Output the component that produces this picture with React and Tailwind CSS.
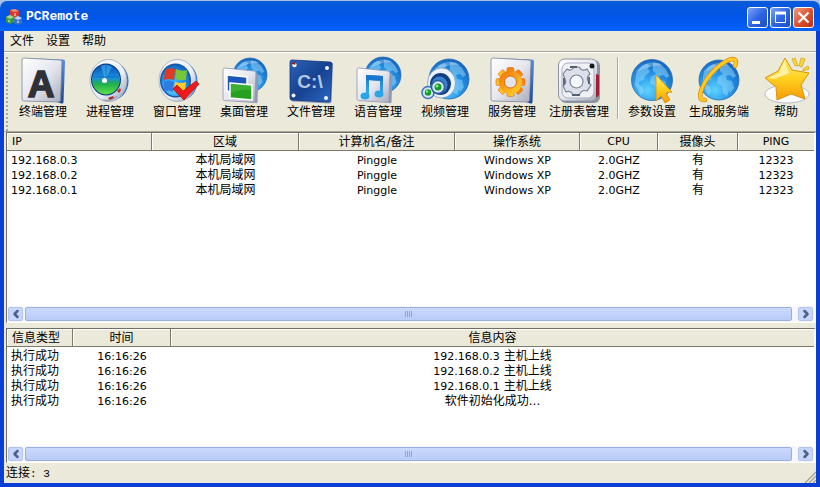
import { ChevronLeft, ChevronRight } from "lucide-react";

const hosts = [
  { ip: "192.168.0.3", area: "本机局域网", name: "Pinggle", os: "Windows XP", cpu: "2.0GHZ", camera: "有", ping: "12323" },
  { ip: "192.168.0.2", area: "本机局域网", name: "Pinggle", os: "Windows XP", cpu: "2.0GHZ", camera: "有", ping: "12323" },
  { ip: "192.168.0.1", area: "本机局域网", name: "Pinggle", os: "Windows XP", cpu: "2.0GHZ", camera: "有", ping: "12323" },
];

const logs = [
  { type: "执行成功", time: "16:16:26", ip: "192.168.0.3", text: "主机上线" },
  { type: "执行成功", time: "16:16:26", ip: "192.168.0.2", text: "主机上线" },
  { type: "执行成功", time: "16:16:26", ip: "192.168.0.1", text: "主机上线" },
  { type: "执行成功", time: "16:16:26", ip: "", text: "软件初始化成功..." },
];

// Gradients shared by all toolbar icons
function IconDefs() {
  return (
    <svg width="0" height="0" className="absolute" aria-hidden="true">
      <defs>
        <linearGradient id="plate" x1="0" y1="0" x2="1" y2="1">
          <stop offset="0" stopColor="#ffffff" />
          <stop offset="0.5" stopColor="#e6e7ef" />
          <stop offset="1" stopColor="#a9acba" />
        </linearGradient>
        <linearGradient id="edge" x1="0" y1="0" x2="0" y2="1">
          <stop offset="0" stopColor="#5b8fdc" />
          <stop offset="1" stopColor="#1c4796" />
        </linearGradient>
        <radialGradient id="globe" cx="0.4" cy="0.75" r="0.8">
          <stop offset="0" stopColor="#5fd2ff" />
          <stop offset="0.5" stopColor="#2596e8" />
          <stop offset="1" stopColor="#1560b8" />
        </radialGradient>
        <linearGradient id="ring" x1="0" y1="0" x2="1" y2="1">
          <stop offset="0" stopColor="#ffffff" />
          <stop offset="0.6" stopColor="#e9edf5" />
          <stop offset="1" stopColor="#8e9ab4" />
        </linearGradient>
        <linearGradient id="radar" x1="0" y1="0" x2="0" y2="1">
          <stop offset="0" stopColor="#0a4fb4" />
          <stop offset="0.45" stopColor="#1a8fe0" />
          <stop offset="0.65" stopColor="#1fb04a" />
          <stop offset="1" stopColor="#5fe04c" />
        </linearGradient>
        <linearGradient id="gold" x1="0" y1="0" x2="0" y2="1">
          <stop offset="0" stopColor="#fff27a" />
          <stop offset="0.5" stopColor="#ffcf1f" />
          <stop offset="1" stopColor="#f59a08" />
        </linearGradient>
        <linearGradient id="orange" gradientUnits="userSpaceOnUse" x1="-12" y1="-12" x2="12" y2="12">
          <stop offset="0" stopColor="#f06a10" />
          <stop offset="1" stopColor="#ffdc28" />
        </linearGradient>
        <linearGradient id="note" x1="0" y1="0" x2="0" y2="1">
          <stop offset="0" stopColor="#1a76cf" />
          <stop offset="1" stopColor="#35b5f2" />
        </linearGradient>
        <linearGradient id="drive" x1="0" y1="0" x2="1" y2="1">
          <stop offset="0" stopColor="#2c62b8" />
          <stop offset="0.5" stopColor="#174291" />
          <stop offset="1" stopColor="#2a69c4" />
        </linearGradient>
      </defs>
    </svg>
  );
}

function Icon({ children }) {
  return (
    <svg width="48" height="48" viewBox="0 0 48 48" className="block overflow-visible" aria-hidden="true">
      {children}
    </svg>
  );
}

function Globe({ cx, cy, r }) {
  return (
    <g transform={`translate(${cx} ${cy}) scale(${r / 20})`}>
      <circle r="20" fill="url(#globe)" stroke="#2a6db0" strokeWidth="0.8" />
      <path
        d="M-15 -9l5-5 5-2 3 2-2 3 2 3-5 4-1 4-4 1-1 3 4 3 1 5-3 3-3-6-3-4zM1-17l6 1 6 5 4 7-3 2-3-3-4 1 1 4 5 1 1 5-4 5-2 5-4-3-1-7-5-3 1-6 5-3-3-3zM10 8l4-3 1 3-4 5z"
        fill="#a5e2ff"
        opacity="0.45"
      />
      <path d="M-14-8a17 17 0 0 1 25-6c-8-1-18 2-25 6z" fill="#fff" opacity="0.25" />
    </g>
  );
}

function Plate() {
  return (
    <>
      <path d="M5 1l39 1.500q2 0 2 2L44.500 45q0 2-2 1.500L38 45 42 4z" fill="url(#edge)" />
      <path d="M5 1l36 2q2 0 2 2l-1.500 38q0 2-2 2L5 44q-2 0-2-2V3q0-2 2-2z" fill="url(#plate)" stroke="#7a849c" strokeWidth="0.8" />
    </>
  );
}

function Card() {
  return (
    <>
      <path d="M35 15l2.500 1.500q1 .5 1 1.500l-1 27q0 1.500-2 1L32 45z" fill="#8f99b5" />
      <path d="M4.500 11L34 14q2 .3 2 2l-1 27.500q0 2-2 2L4.500 43.500q-1.500 0-1.500-2V12.500Q3 11 4.500 11z" fill="url(#plate)" stroke="#8b96b4" strokeWidth="0.8" />
    </>
  );
}

const TerminalIcon = () => (
  <Icon>
    <Plate />
    <text x="22" y="40" textAnchor="middle" fontSize="37" fontWeight="bold" fill="#2f3136" stroke="#2f3136" strokeWidth="1.500" fontFamily="Liberation Sans, sans-serif">
      A
    </text>
  </Icon>
);

const ProcessIcon = () => (
  <Icon>
    <ellipse cx="26" cy="24" rx="16.500" ry="19" fill="#1c6cc4" />
    <ellipse cx="22.500" cy="23.500" rx="18.500" ry="21" fill="url(#ring)" stroke="#98a6bf" strokeWidth="0.8" />
    <ellipse cx="20" cy="22.500" rx="15" ry="16" fill="#0a3a7c" />
    <ellipse cx="20" cy="22.500" rx="14" ry="15" fill="url(#radar)" />
    <path d="M19 23L15 9q6-3 11 1z" fill="#4fc3ff" opacity="0.5" />
    <path d="M7 20h26M20 8v14" stroke="#06336b" strokeWidth="0.6" opacity="0.5" fill="none" />
    <circle cx="18.500" cy="23.500" r="2.500" fill="#fff" />
    <path d="M22 41l5-2 1 2-4 2z" fill="#b3271e" />
    <path d="M31 34l3-3 1 2-2 3z" fill="#c62c22" />
    <path d="M17 43q8 2 14-4" stroke="#8b94a6" strokeWidth="1" fill="none" />
  </Icon>
);

const WindowIcon = () => (
  <Icon>
    <ellipse cx="28" cy="24" rx="16.500" ry="19" fill="#2a7acb" />
    <ellipse cx="24.500" cy="23.500" rx="18.500" ry="21" fill="url(#ring)" stroke="#98a6bf" strokeWidth="0.8" />
    <ellipse cx="22.500" cy="23.500" rx="15.500" ry="17" fill="#1658a8" />
    <ellipse cx="22.500" cy="23.500" rx="14" ry="15.500" fill="url(#globe)" />
    <path d="M12 13q5-3 10-1l-1 11q-5-2-10 0z" fill="#e03a24" />
    <path d="M23 12q6 3 11 1l-1 10q-5 1-11-1z" fill="#76c63a" />
    <path d="M11 25q5-3 10 0l-1 10q-5-3-9 0z" fill="#2f7de4" />
    <path d="M22 25q6 2 11 0l-1 10q-5 2-11-1z" fill="#fcca2b" />
    <path d="M20 32l4-4 6 6L43 24l3 3-15 16z" fill="#ec1c1c" stroke="#b30d0d" strokeWidth="0.7" />
  </Icon>
);

const DesktopIcon = () => (
  <Icon>
    <Globe cx={30} cy={18} r={17} />
    <Card />
    <path d="M7 18l20 2v16L7 34z" fill="#1e57bb" stroke="#fff" strokeWidth="1.500" />
    <path d="M10 26l22 2v15l-22-2z" fill="#26a01f" stroke="#fff" strokeWidth="1.500" />
    <path d="M11 27l20 2v4q-10-1-20 3z" fill="#6fd05c" opacity="0.3" />
  </Icon>
);

const FileIcon = () => (
  <Icon>
    <path d="M43 5l3 1.500L44.500 45l-2 1.500L5 44.500 3 42z" fill="#8d99b8" />
    <path d="M5 3l38 2q2 0 2 2l-1.500 36q0 2-2 2L5 43q-2 0-2-2V5q0-2 2-2z" fill="url(#drive)" stroke="#12387c" strokeWidth="0.8" />
    <circle cx="7.500" cy="8" r="2.200" fill="#fff" />
    <path d="M4 6l5-1-1 3z" fill="#8f1620" />
    <circle cx="40" cy="11" r="2" fill="#eef4ff" />
    <circle cx="6.500" cy="38.500" r="2" fill="#eef4ff" />
    <circle cx="39" cy="41" r="2" fill="#eef4ff" />
    <text x="23" y="31" textAnchor="middle" fontSize="19" fontWeight="bold" fill="#b4c8e6" fontFamily="Liberation Sans, sans-serif">
      C:\
    </text>
  </Icon>
);

const AudioIcon = () => (
  <Icon>
    <Globe cx={29} cy={18} r={18} />
    <Card />
    <path d="M12 18l17 1v5l-14-1v17h-3zM26 21h3v16h-3z" fill="url(#note)" />
    <path d="M12 18l17 1v5l-17-1z" fill="#1a76cf" />
    <ellipse cx="11" cy="39" rx="4.500" ry="3.500" fill="#2ba5ea" />
    <ellipse cx="25" cy="37" rx="4.500" ry="3.500" fill="#2ba5ea" />
  </Icon>
);

const VideoIcon = () => (
  <Icon>
    <Globe cx={28} cy={22} r={20} />
    <ellipse cx="20.500" cy="26" rx="14" ry="15" fill="#eef3fa" stroke="#7f9cc0" strokeWidth="0.8" />
    <ellipse cx="19.500" cy="27" rx="10.500" ry="11" fill="#123f80" />
    <ellipse cx="18.500" cy="28" rx="8" ry="8.500" fill="#3b7fd0" />
    <circle cx="7" cy="35.500" r="6" fill="#d6e6f8" stroke="#3a73b8" strokeWidth="1.500" />
    <circle cx="17" cy="30" r="6.500" fill="#d6e6f8" stroke="#285f9f" strokeWidth="1.500" />
    <circle cx="17" cy="30" r="3.500" fill="#1a9a2c" />
    <circle cx="7" cy="35.500" r="3.200" fill="#1a9a2c" />
    <circle cx="16" cy="29" r="1.500" fill="#7df06e" />
    <circle cx="6" cy="34.500" r="1.300" fill="#7df06e" />
  </Icon>
);

const ServiceIcon = () => (
  <Icon>
    <Plate />
    <g transform="translate(22.500 25)">
      {[0, 45, 90, 135].map((a) => (
        <rect key={a} x="-3.500" y="-14.500" width="7" height="29" rx="1.500" fill="url(#orange)" stroke="#e0680c" strokeWidth="0.6" transform={`rotate(${a})`} />
      ))}
      <circle r="11.500" fill="url(#orange)" />
      <circle r="6" fill="#e4e5ec" stroke="#e0680c" strokeWidth="1" />
    </g>
  </Icon>
);

const RegistryIcon = () => (
  <Icon>
    <rect x="5" y="3" width="40" height="43" rx="6" fill="#8c93a5" />
    <rect x="3.500" y="2" width="39" height="42" rx="6" fill="url(#plate)" stroke="#8b91a2" strokeWidth="1" />
    <rect x="7" y="6" width="32" height="35" rx="6" fill="#eff1f6" stroke="#a9afbf" strokeWidth="1" />
    <path
      d="M12 12q4 3 7-2h5q3 5 8 2l3 5q-4 3-2 7 1 3 3 4l-4 6q-5-2-8 4h-6q-2-5-7-3l-3-6q4-3 2-7-1-3-2-5z"
      fill="#dde0ea"
      stroke="#7a8294"
      strokeWidth="1.200"
    />
    <circle cx="21.500" cy="24.500" r="6.500" fill="#f7f8fb" stroke="#7c8497" strokeWidth="1.200" />
    <path d="M9 21v7M34 20v7M15 10h7M17 38h8" stroke="#52606f" strokeWidth="1.800" />
    <circle cx="37" cy="9" r="2.500" fill="#15171d" />
    <path d="M41 17l3 1v20l-3 3z" fill="#9c1f33" />
  </Icon>
);

const SettingsIcon = () => (
  <Icon>
    <Globe cx={24} cy={23} r={20.5} />
    <path d="M28 18l16 17-6 1 4 7-5 3-4-7-5 5z" fill="url(#gold)" stroke="#d98a0c" strokeWidth="0.8" />
  </Icon>
);

const BuildIcon = () => (
  <Icon>
    <Globe cx={24} cy={23} r={20} />
    <path d="M10 43C4 44 4 38 8 29 14 16 28 4 37 2q6 0 3 7" fill="none" stroke="#d98d0c" strokeWidth="4.500" strokeLinecap="round" />
    <path d="M10 43C4 44 4 38 8 29 14 16 28 4 37 2q6 0 3 7" fill="none" stroke="#ffc928" strokeWidth="3" strokeLinecap="round" />
  </Icon>
);

const HelpIcon = () => (
  <Icon>
    <ellipse cx="25" cy="37" rx="22" ry="9" fill="#fbfbfd" stroke="#b9bcc8" strokeWidth="1" />
    <path d="M23 1l7 12 17 3-8 12 4 14-14-5-14 6-1-13L3 21l13-7z" fill="url(#gold)" stroke="#d9940e" strokeWidth="1" strokeLinejoin="round" />
    <path d="M22 5l5 11-14 6-7-1 11-5z" fill="#fffbd0" opacity="0.7" />
    <path d="M30 2l3-1 3 8-3 0zM39 1l4 1-3 8-3-1zM46 9l1 3-6 2 0-2z" fill="#ffd62e" stroke="#c9960c" strokeWidth="0.6" />
  </Icon>
);

const tools = [
  { label: "终端管理", icon: TerminalIcon },
  { label: "进程管理", icon: ProcessIcon },
  { label: "窗口管理", icon: WindowIcon },
  { label: "桌面管理", icon: DesktopIcon },
  { label: "文件管理", icon: FileIcon },
  { label: "语音管理", icon: AudioIcon },
  { label: "视频管理", icon: VideoIcon },
  { label: "服务管理", icon: ServiceIcon },
  { label: "注册表管理", icon: RegistryIcon },
];

const extraTools = [
  { label: "参数设置", icon: SettingsIcon },
  { label: "生成服务端", icon: BuildIcon },
  { label: "帮助", icon: HelpIcon },
];

function ToolButton({ label, icon: ToolIcon }) {
  return (
    <button type="button" className="flex w-[60px] shrink-0 flex-col items-center whitespace-nowrap leading-[14px]">
      <ToolIcon />
      {label}
    </button>
  );
}

function TitleButton({ label, danger, children }) {
  return (
    <button
      type="button"
      aria-label={label}
      className={`flex h-[21px] w-[21px] items-center justify-center rounded-[3px] border border-white ${
        danger ? "bg-linear-to-br from-[#f09a80] via-[#dd5430] to-[#b83010]" : "bg-linear-to-br from-[#7ba4f5] via-[#2f66e4] to-[#1a4cc8]"
      }`}
    >
      <svg width="19" height="19" viewBox="0 0 19 19" fill="none" stroke="#fff">
        {children}
      </svg>
    </button>
  );
}

function TitleBar() {
  return (
    <header className="flex h-[30px] shrink-0 items-center rounded-t-[7px] bg-linear-to-b from-[#0a5bd8] via-[#0054e6] to-[#0562fb] pl-[6px] pr-[6px] pt-[2px]">
      <svg width="16" height="16" viewBox="0 0 16 16" aria-hidden="true">
        <path d="M4 1l5-1 4 2v6L9 9 4 7z" fill="#d8392b" />
        <path d="M4 1l5-1 4 2-5 1z" fill="#f58b7c" />
        <path d="M0 8l4-2 4 2v5l-4 2-4-2z" fill="#3f9a3c" />
        <path d="M0 8l4-2 4 2-4 2z" fill="#a5d98c" />
        <path d="M8 9l4-2 4 2v5l-4 2-4-2z" fill="#3a74c4" />
        <path d="M8 9l4-2 4 2-4 2z" fill="#b5d4f5" />
        <path d="M3 11v2M12 12v2M9 4v3" stroke="#fff" strokeWidth="1" />
      </svg>
      <h1 className="ml-1 flex-1 font-['Liberation_Mono',monospace] text-[13px] font-bold text-white">PCRemote</h1>
      <div className="flex gap-[2px]">
        <TitleButton label="最小化">
          <path d="M4 14.500h8" strokeWidth="3" />
        </TitleButton>
        <TitleButton label="最大化">
          <path d="M4.500 4.500h10v10h-10z" />
          <path d="M4 5h11" strokeWidth="3" />
        </TitleButton>
        <TitleButton label="关闭" danger>
          <path d="M4.500 4.500l10 10M14.500 4.500l-10 10" strokeWidth="2.200" />
        </TitleButton>
      </div>
    </header>
  );
}

function ScrollBar() {
  return (
    <div className="flex h-4 shrink-0 items-stretch gap-[2px] bg-[#f7f7fb] px-px py-px">
      <button type="button" aria-label="向左滚动" className="flex w-[15px] items-center justify-center rounded-[2px] border border-[#b0c4f0] bg-[#c8d6fb] text-[#4d6185]">
        <ChevronLeft className="h-3 w-3 shrink-0" strokeWidth={5} />
      </button>
      <div className="mr-1 flex flex-1 items-center justify-center gap-px rounded-[2px] border border-[#98b0e0] bg-linear-to-b from-[#cbd9fd] to-[#b9cbf8]">
        {[0, 1, 2, 3].map((n) => (
          <span key={n} className="h-[6px] w-px bg-[#8ca4dc]" />
        ))}
      </div>
      <button type="button" aria-label="向右滚动" className="flex w-[15px] items-center justify-center rounded-[2px] border border-[#b0c4f0] bg-[#c8d6fb] text-[#4d6185]">
        <ChevronRight className="h-3 w-3 shrink-0" strokeWidth={5} />
      </button>
    </div>
  );
}

function Th({ children, className = "text-center" }) {
  return (
    <th className={`h-[18px] border-b border-r border-[#7b796c] bg-[#ebe9da] p-0 pt-px font-normal leading-4 shadow-[inset_1px_1px_0_#fff] last:border-r-0 ${className}`}>
      {children}
    </th>
  );
}

function HostList() {
  return (
    <section className="ml-[2px] flex min-h-[190px] flex-1 flex-col border-b border-l border-r-2 border-t border-b-white border-l-[#716f64] border-r-white border-t-[#716f64] bg-white">
      <div className="flex-1">
        <table className="w-full table-fixed border-separate border-spacing-0 text-center">
          <colgroup>
            <col className="w-[145px]" />
            <col className="w-[147px]" />
            <col className="w-[156px]" />
            <col className="w-[125px]" />
            <col className="w-[78px]" />
            <col className="w-[80px]" />
            <col />
          </colgroup>
          <thead>
            <tr>
              <Th className="text-left text-[11px]">
                <span className="pl-[5px]">IP</span>
              </Th>
              <Th>区域</Th>
              <Th>计算机名/备注</Th>
              <Th>操作系统</Th>
              <Th className="text-center text-[11px]">CPU</Th>
              <Th>摄像头</Th>
              <Th className="text-center text-[11px]">PING</Th>
            </tr>
          </thead>
          <tbody className="leading-[15px] before:block before:h-[2px]">
            {hosts.map((host) => (
              <tr key={host.ip} className="h-[15px] text-[11px]">
                <td className="p-0 pl-1 text-left">{host.ip}</td>
                <td className="p-0 text-[12px]">{host.area}</td>
                <td className="p-0">{host.name}</td>
                <td className="p-0">{host.os}</td>
                <td className="p-0">{host.cpu}</td>
                <td className="p-0 text-[12px]">{host.camera}</td>
                <td className="p-0">{host.ping}</td>
              </tr>
            ))}
          </tbody>
        </table>
      </div>
      <ScrollBar />
    </section>
  );
}

function LogList() {
  return (
    <section className="ml-[2px] mt-[5px] flex min-h-[135px] shrink-0 flex-col border-b border-l border-r-2 border-t border-b-white border-l-[#716f64] border-r-white border-t-[#716f64] bg-white">
      <div className="flex-1">
        <table className="w-full table-fixed border-separate border-spacing-0 text-center">
          <colgroup>
            <col className="w-[66px]" />
            <col className="w-[98px]" />
            <col />
          </colgroup>
          <thead>
            <tr>
              <Th className="text-left">
                <span className="pl-[5px]">信息类型</span>
              </Th>
              <Th>时间</Th>
              <Th>信息内容</Th>
            </tr>
          </thead>
          <tbody className="leading-[15px] before:block before:h-[2px]">
            {logs.map((log, index) => (
              <tr key={index} className="h-[15px]">
                <td className="p-0 pl-1 text-left">{log.type}</td>
                <td className="p-0 text-[11px]">{log.time}</td>
                <td className="p-0">
                  <div className="flex h-[15px] items-center justify-center gap-1">
                    {log.ip && <span className="text-[11px]">{log.ip}</span>}
                    <span>{log.text}</span>
                  </div>
                </td>
              </tr>
            ))}
          </tbody>
        </table>
      </div>
      <ScrollBar />
    </section>
  );
}

function App() {
  return (
    <div className="flex min-h-screen flex-col bg-[#a9c1e6] pt-px font-['DejaVu_Sans','Noto_Sans_CJK_SC',sans-serif] text-[12px] text-black">
      <IconDefs />
      <TitleBar />
      <main className="flex flex-1 flex-col border-x-4 border-b-4 border-[#0a3fd6] bg-[#ebe9da]">
        <nav className="flex h-5 shrink-0 items-center gap-3 pl-[6px]">
          <button type="button">文件</button>
          <button type="button">设置</button>
          <button type="button">帮助</button>
        </nav>

        {/* Toolbar */}
        <div className="flex h-[81px] shrink-0 gap-[7px] border-b border-t border-[#aca899] pt-[5px] shadow-[inset_0_1px_0_#fff]">
          <div className="-mr-[5px] ml-[2px] w-[5px] shrink-0 border-l-2 border-dotted border-[#aca899]" />
          {tools.map((tool) => (
            <ToolButton key={tool.label} {...tool} />
          ))}
          <div className="-mr-1 ml-px h-[62px] w-[2px] shrink-0 border-l border-r border-l-[#aca899] border-r-white" />
          {extraTools.map((tool) => (
            <ToolButton key={tool.label} {...tool} />
          ))}
        </div>

        <HostList />
        <LogList />

        <footer className="flex h-5 shrink-0 items-center justify-between pl-[2px]">
          <span>
            连接<span className="font-['Liberation_Mono',monospace] text-[11px]">: 3</span>
          </span>
          <svg width="12" height="12" viewBox="0 0 12 12" className="self-end" fill="none" stroke="#aca899" strokeWidth="1.500" aria-hidden="true">
            <path d="M1 12L12 1M5 12l7-7M9 12l3-3" />
          </svg>
        </footer>
      </main>
    </div>
  );
}

export default App;
